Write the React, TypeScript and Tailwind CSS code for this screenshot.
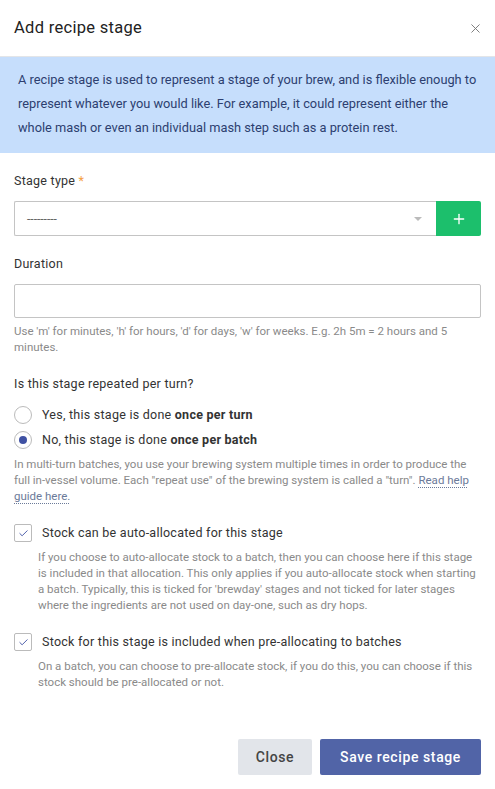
import { Check, Plus, X } from "lucide-react";

export default function App() {
  return (
    <div className="w-[495px] min-h-[789px] bg-white font-['Roboto',sans-serif] text-[#333]">
      <div className="h-[57px] flex items-center justify-between pl-[14px] pr-[12px] border-b border-[#e3e5e8]">
        <div className="text-[16.5px] tracking-[0.3px] text-[#222]">Add recipe stage</div>
        <X className="w-[15px] h-[15px] text-[#777]" strokeWidth={1.5} />
      </div>
      <div className="bg-[#c6defc] pl-[18px] pr-[8px] pt-[11px] pb-[13px] text-[12.8px] leading-[24px] text-[#2d3f70]">
        A recipe stage is used to represent a stage of your brew, and is flexible enough to
        <br />
        represent whatever you would like. For example, it could represent either the
        <br />
        whole mash or even an individual mash step such as a protein rest.
      </div>

      <div className="px-[14px]">
        <div className="pt-[20px] text-[12.5px] leading-[16px] tracking-[0.25px] text-[#333]">
          Stage type <span className="text-[#f5a044]">*</span>
        </div>
        <div className="mt-[12px] flex h-[35px]">
          <div className="flex-1 flex items-center justify-between border border-[#c4c4c4] border-r-0 rounded-l-[2px] pl-[12px] pr-[14px]">
            <span className="text-[12px] text-[#666] leading-none">---------</span>
            <span className="w-0 h-0 border-l-[4px] border-r-[4px] border-t-[4px] border-l-transparent border-r-transparent border-t-[#bbb]" />
          </div>
          <div className="w-[45px] bg-[#1cbf6c] rounded-r-[2px] flex items-center justify-center">
            <Plus className="w-[16px] h-[16px] text-white" strokeWidth={2} />
          </div>
        </div>

        <div className="mt-[20px] text-[12.5px] leading-[16px] tracking-[0.25px]">Duration</div>
        <div className="mt-[12px] h-[34px] border border-[#c4c4c4] rounded-[2px]" />
        <div className="mt-[5px] text-[11.5px] leading-[16px] text-[#8a8a8a]">
          Use 'm' for minutes, 'h' for hours, 'd' for days, 'w' for weeks. E.g. 2h 5m = 2 hours and 5 minutes.
        </div>

        <div className="mt-[21px] text-[12.5px] leading-[16px] tracking-[0.25px]">Is this stage repeated per turn?</div>
        <div className="mt-[14px] flex flex-col gap-[7px]">
          <label className="flex items-center h-[18px]">
            <span className="w-[18px] h-[18px] rounded-full border border-[#bbb] bg-white" />
            <span className="ml-[10px] text-[12.5px] tracking-[0.25px]">
              Yes, this stage is done <b className="font-bold">once per turn</b>
            </span>
          </label>
          <label className="flex items-center h-[18px]">
            <span className="w-[18px] h-[18px] rounded-full border border-[#bbb] bg-white flex items-center justify-center">
              <span className="w-[8px] h-[8px] rounded-full bg-[#3f51a3]" />
            </span>
            <span className="ml-[10px] text-[12.5px] tracking-[0.25px]">
              No, this stage is done <b className="font-bold">once per batch</b>
            </span>
          </label>
        </div>
        <p className="mt-[7px] text-[11.5px] leading-[16px] text-[#8a8a8a]">
          In multi-turn batches, you use your brewing system multiple times in order to produce the
          full in-vessel volume. Each "repeat use" of the brewing system is called a "turn".{" "}
          <a className="text-[#6b7a99] underline decoration-dotted underline-offset-[3px]">Read help guide here.</a>
        </p>

        <div className="mt-[20px] flex items-center h-[18px]">
          <span className="w-[18px] h-[18px] border border-[#bbb] rounded-[2px] flex items-center justify-center">
            <Check className="w-[11px] h-[11px] text-[#3f51a3]" strokeWidth={2} />
          </span>
          <span className="ml-[10px] text-[12.5px] tracking-[0.25px]">Stock can be auto-allocated for this stage</span>
        </div>
        <div className="mt-[7px] pl-[24px] text-[11.5px] leading-[16px] text-[#8a8a8a]">
          If you choose to auto-allocate stock to a batch, then you can choose here if this stage
          is included in that allocation. This only applies if you auto-allocate stock when starting
          a batch. Typically, this is ticked for 'brewday' stages and not ticked for later stages
          where the ingredients are not used on day-one, such as dry hops.
        </div>

        <div className="mt-[20px] flex items-center h-[18px]">
          <span className="w-[18px] h-[18px] border border-[#bbb] rounded-[2px] flex items-center justify-center">
            <Check className="w-[11px] h-[11px] text-[#3f51a3]" strokeWidth={2} />
          </span>
          <span className="ml-[10px] text-[12.5px] tracking-[0.25px]">
            Stock for this stage is included when pre-allocating to batches
          </span>
        </div>
        <div className="mt-[7px] pl-[24px] text-[11.5px] leading-[16px] text-[#8a8a8a]">
          On a batch, you can choose to pre-allocate stock, if you do this, you can choose if this
          stock should be pre-allocated or not.
        </div>

        <div className="mt-[49px] flex justify-end gap-[8px]">
          <button className="h-[36px] w-[74px] bg-[#e2e5ea] rounded-[2px] text-[14px] font-medium tracking-[0.6px] text-[#444]">
            Close
          </button>
          <button className="h-[36px] w-[161px] bg-[#5164a7] rounded-[2px] text-[14px] font-medium tracking-[0.6px] text-white">
            Save recipe stage
          </button>
        </div>
      </div>
    </div>
  );
}
